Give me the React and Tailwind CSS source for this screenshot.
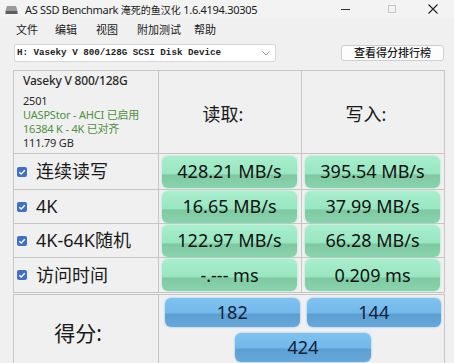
import React from 'react';

const ui = { fontFamily: '"Noto Sans", "Noto Sans CJK SC", sans-serif' };

const Check = () => (
    <svg width="10" height="10" viewBox="0 0 10 10" className="shrink-0">
        <rect x="0" y="0" width="10" height="10" rx="2" fill="#3f6fc6" />
        <path d="M2.3 5.2 L4.2 7 L7.8 3.2" stroke="#fff" strokeWidth="1.4" fill="none" />
    </svg>
);

const Green = ({ children }) => (
    <div className="h-[32px] w-full rounded-[6px] flex items-center justify-center text-[18px] text-[#111] shadow-[0_0_2px_#8fe0bb] bg-[linear-gradient(180deg,#a8eecd_0%,#98e6c1_56%,#7fc9a2_59%,#88d4ae_100%)]">
        {children}
    </div>
);

const Blue = ({ children, className = '' }) => (
    <div className={`h-[29px] rounded-[6px] flex items-center justify-center text-[18px] text-[#13203a] shadow-[0_0_2px_#6fb3e6] bg-[linear-gradient(180deg,#7ec3f0_0%,#72b8ea_52%,#5d9fd2_55%,#66a8da_100%)] ${className}`}>
        {children}
    </div>
);

const rows = [
    { label: '连续读写', read: '428.21 MB/s', write: '395.54 MB/s', h: 'h-[36px]' },
    { label: '4K', read: '16.65 MB/s', write: '37.99 MB/s', h: 'h-[34px]' },
    { label: '4K-64K随机', read: '122.97 MB/s', write: '66.28 MB/s', h: 'h-[34px]' },
    { label: '访问时间', read: '-.--- ms', write: '0.209 ms', h: 'h-[35px]' },
];

const menu = [
    { t: '文件', c: 'ml-[16px]' },
    { t: '编辑', c: 'ml-[17px]' },
    { t: '视图', c: 'ml-[19px]' },
    { t: '附加测试', c: 'ml-[19px]' },
    { t: '帮助', c: 'ml-[13px]' },
];

export default function App() {
    return (
        <div className="w-[454px] h-[363px] overflow-hidden bg-[#f0f0f0] text-[#1a1a1a]" style={ui}>
            {/* title bar */}
            <div className="h-[18px] flex items-center bg-[#f3f3f3]">
                <svg width="13" height="9" viewBox="0 0 13 9" className="ml-[5px]">
                    <path d="M2 1 L11 1 L12.5 6 L0.5 6 Z" fill="#9a9a9a" />
                    <rect x="0.5" y="6" width="12" height="3" fill="#5e5e5e" />
                </svg>
                <span className="ml-[7px] text-[11px] leading-none tracking-[-0.3px]">
                    AS SSD Benchmark <span className="text-[10px] tracking-normal">淹死的鱼汉化</span> 1.6.4194.30305
                </span>
                <span className="ml-auto w-[9px] h-px bg-[#333] mr-[38px]" />
                <span className="w-[8px] h-[8px] border border-[#c8c8c8] mr-[32px]" />
                <svg width="10" height="10" viewBox="0 0 10 10" className="mr-[16px]">
                    <path d="M0.5 0.5 L9.5 9.5 M9.5 0.5 L0.5 9.5" stroke="#222" strokeWidth="1.1" />
                </svg>
            </div>

            {/* menu */}
            <div className="h-[24px] flex items-center text-[11px]">
                {menu.map((m) => (
                    <span key={m.t} className={m.c}>{m.t}</span>
                ))}
            </div>

            {/* drive select + ranking button */}
            <div className="h-[18px] mt-[2px] flex items-center">
                <div className="ml-[14px] w-[262px] h-[18px] bg-white border border-[#d6d6d6] rounded-[2px] flex items-center">
                    <span className="ml-[2px] text-[9.2px] font-bold text-[#222]" style={{ fontFamily: '"Liberation Mono", monospace' }}>
                        H: Vaseky V 800/128G SCSI Disk Device
                    </span>
                    <svg width="8" height="5" viewBox="0 0 8 5" className="ml-auto mr-[5px]">
                        <path d="M0.5 0.5 L4 4 L7.5 0.5" stroke="#9a9a9a" fill="none" />
                    </svg>
                </div>
                <div className="ml-[65px] w-[103px] h-[16px] bg-[#fdfdfd] border border-[#cfcfcf] rounded-[3px] flex items-center justify-center text-[11px] font-medium text-[#222]">
                    查看得分排行榜
                </div>
            </div>

            {/* results table */}
            <div className="mt-[8px] ml-[13px] w-[432px] border-l border-t border-[#c6c6c6] grid grid-cols-[145px_143px_143px]">
                <div className="h-[83px] border-r border-b border-[#c6c6c6] pl-[9px] pt-[1px]">
                    <div className="text-[12px] font-medium text-[#2a2a2a] leading-[18px] tracking-[-0.2px]">Vaseky V 800/128G</div>
                    <div className="mt-[4px] text-[11px] leading-[14px] tracking-[-0.2px]">
                        <div className="text-[#2a2a2a]">2501</div>
                        <div className="text-[#4e9140]">UASPStor - AHCI 已启用</div>
                        <div className="text-[#4e9140]">16384 K - 4K 已对齐</div>
                        <div className="text-[#2a2a2a]">111.79 GB</div>
                    </div>
                </div>
                <div className="h-[83px] border-r border-b border-[#c6c6c6] flex items-center justify-center text-[18px] pt-[4px] pr-[14px]">读取:</div>
                <div className="h-[83px] border-r border-b border-[#c6c6c6] flex items-center justify-center text-[18px] pt-[4px] pr-[14px]">写入:</div>

                {rows.map((r) => (
                    <React.Fragment key={r.label}>
                        <div className={`${r.h} border-r border-b border-[#c6c6c6] flex items-center pl-[3px] gap-[9px] text-[18px]`}>
                            <Check />
                            <span>{r.label}</span>
                        </div>
                        <div className={`${r.h} border-r border-b border-[#c6c6c6] flex items-center pl-[3px] pr-[4px]`}>
                            <Green>{r.read}</Green>
                        </div>
                        <div className={`${r.h} border-r border-b border-[#c6c6c6] flex items-center pl-[3px] pr-[4px]`}>
                            <Green>{r.write}</Green>
                        </div>
                    </React.Fragment>
                ))}
            </div>

            {/* score */}
            <div className="mt-[1px] ml-[13px] w-[432px] h-[80px] border-l border-t border-[#c6c6c6] grid grid-cols-[145px_286px]">
                <div className="border-r border-[#c6c6c6] flex items-center justify-center text-[21px] pb-[2px] pr-[16px]">得分:</div>
                <div className="border-r border-[#c6c6c6] pt-[3px] pl-[6px] pr-[3px]">
                    <div className="flex gap-[7px]">
                        <Blue className="flex-1">182</Blue>
                        <Blue className="flex-1">144</Blue>
                    </div>
                    <div className="mt-[6px] flex justify-center">
                        <Blue className="w-[136px]">424</Blue>
                    </div>
                </div>
            </div>
        </div>
    );
}
